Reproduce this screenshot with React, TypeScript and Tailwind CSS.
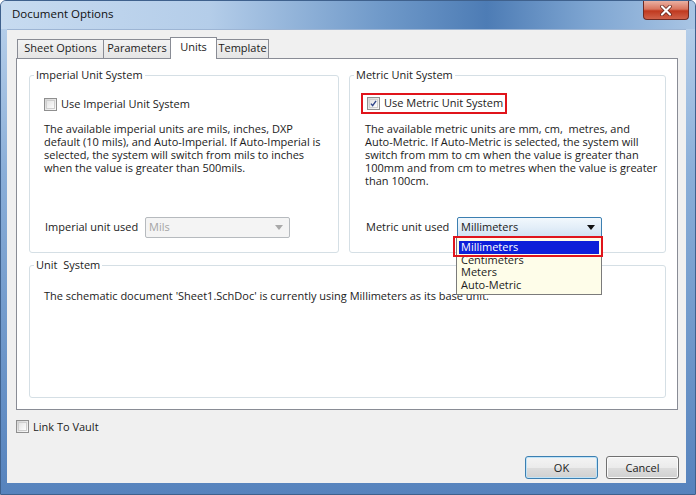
import React from "react";

function Check({ on = false }: { on?: boolean }) {
  return (
    <span className="flex h-[13px] w-[13px] shrink-0 items-center justify-center border border-[#8f8f8f] bg-[linear-gradient(135deg,#d4d4d4,#fbfbfb)]">
      <span className="flex h-[9px] w-[9px] items-center justify-center border border-[#cfcfcf] bg-[linear-gradient(135deg,#e4e4e4,#fdfdfd)]">
        {on && (
          <svg width="9" height="9" viewBox="0 0 9 9">
            <path d="M1.2 4.6 L3.4 7.2 L7.8 1.2" fill="none" stroke="#2f4489" strokeWidth="1.8" />
          </svg>
        )}
      </span>
    </span>
  );
}

function Group({ title, className, children }: { title: string; className: string; children?: React.ReactNode }) {
  return (
    <div className={`relative rounded-[3px] border border-[#d5dfe5] ${className}`}>
      <span className="absolute left-[4px] top-[-9px] whitespace-pre bg-white px-[2px] leading-[15px]">{title}</span>
      {children}
    </div>
  );
}

function Arrow({ color }: { color: string }) {
  return (
    <svg width="8" height="5" viewBox="0 0 8 5">
      <path d="M0 0 H8 L4 5 Z" fill={color} />
    </svg>
  );
}

export default function App() {
  return (
    <div className="h-[495px] w-[696px] bg-white font-['Open_Sans','Noto_Sans',sans-serif] text-[11px] text-[#1b1b1b]">
      <div className="flex h-[495px] w-[696px] flex-col rounded-t-[6px] border border-[#3f618d] bg-[linear-gradient(180deg,#bcd3ec_0%,#8aaed8_35%,#5683bd_100%)]">
        {/* title bar */}
        <div className="flex h-[28px] items-start rounded-t-[5px] bg-[linear-gradient(90deg,#c7dbf0_0%,#b4cde9_30%,#6f99c9_55%,#4d7cb5_70%,#7fa6d2_85%,#a9c5e4_100%)]">
          <span className="mt-[4px] pl-[11px] text-[11.5px] leading-[18px] text-[#101010]">Document Options</span>
          <button className="ml-auto mr-[6px] flex h-[19px] w-[46px] items-center justify-center rounded-b-[4px] border border-t-0 border-[#6e2a23] bg-[linear-gradient(180deg,#eab0a2_0%,#d9755f_45%,#c0391f_55%,#d0624a_100%)]">
            <svg width="12" height="11" viewBox="0 0 12 11">
              <path d="M2 1.5 L10 9.5 M10 1.5 L2 9.5" stroke="#5a1c14" strokeWidth="3.6" strokeLinecap="round" />
              <path d="M2 1.5 L10 9.5 M10 1.5 L2 9.5" stroke="#ffffff" strokeWidth="2.2" strokeLinecap="round" />
            </svg>
          </button>
        </div>

        {/* client */}
        <div className="ml-[6px] mr-[9px] flex h-[454px] flex-col border-t border-[#9db5d4] bg-[#f0f0f0]">
          {/* tabs */}
          <div className="relative z-10 ml-[10px] mt-[7px] mb-[-1px] flex h-[22px] items-end">
            <div className="flex h-[20px] w-[87px] items-center justify-center border border-[#898c95] bg-[linear-gradient(180deg,#f3f3f3,#e5e5e5)] pb-[1px]">Sheet Options</div>
            <div className="flex h-[20px] w-[67px] items-center justify-center border border-l-0 border-[#898c95] bg-[linear-gradient(180deg,#f3f3f3,#e5e5e5)] pb-[1px]">Parameters</div>
            <div className="ml-[-1px] flex h-[22px] w-[47px] items-center justify-center border border-b-0 border-[#898c95] bg-white pb-[2px]">Units</div>
            <div className="flex h-[20px] w-[52px] items-center justify-center border border-l-0 border-[#898c95] bg-[linear-gradient(180deg,#f3f3f3,#e5e5e5)] pb-[1px]">Template</div>
          </div>

          {/* panel */}
          <div className="ml-[9px] mr-[8px] flex h-[352px] flex-col border border-[#898c95] bg-white pl-[12px] pr-[11px] pt-[16px]">
            <div className="flex h-[178px] gap-[10px]">
              <Group title="Imperial Unit System" className="flex w-[310px] flex-col pl-[14px] pt-[20px] pb-[14px]">
                <div className="flex h-[16px] items-center gap-[4px]">
                  <Check />
                  <span>Use Imperial Unit System</span>
                </div>
                <div className="mt-[10px] whitespace-nowrap leading-[13px]">
                  The available imperial units are mils, inches, DXP
                  <br />
                  default (10 mils), and Auto-Imperial. If Auto-Imperial is
                  <br />
                  selected, the system will switch from mils to inches
                  <br />
                  when the value is greater than 500mils.
                </div>
                <div className="mt-auto flex items-center">
                  <span className="w-[101px] pl-[1px]">Imperial unit used</span>
                  <div className="flex h-[21px] w-[145px] items-center justify-between rounded-[2px] border border-[#b6babe] bg-[#f4f4f4] pl-[3px] pr-[6px] text-[#a4a4a4]">
                    <span>Mils</span>
                    <Arrow color="#a9a9a9" />
                  </div>
                </div>
              </Group>

              <Group title="Metric Unit System" className="flex flex-1 flex-col pl-[15px] pt-[17px] pb-[14px]">
                <div className="ml-[-4px] flex h-[21px] items-center gap-[4px] self-start border-2 border-[#e0141b] pl-[4px] pr-[2px]">
                  <Check on />
                  <span>Use Metric Unit System</span>
                </div>
                <div className="mt-[8px] whitespace-nowrap leading-[13px]">
                  The available metric units are mm, cm,&nbsp; metres, and
                  <br />
                  Auto-Metric. If Auto-Metric is selected, the system will
                  <br />
                  switch from mm to cm when the value is greater than
                  <br />
                  100mm and from cm to metres when the value is greater
                  <br />
                  than 100cm.
                </div>
                <div className="mt-auto flex items-center">
                  <span className="w-[92px] pl-[1px]">Metric unit used</span>
                  <div className="relative h-[21px] w-[145px]">
                    <div className="flex h-full w-full items-center justify-between rounded-[2px] border border-[#3c7fb1] bg-[linear-gradient(180deg,#f2f8fd_0%,#e3eef8_50%,#cfe2f2_100%)] pl-[3px] pr-[6px]">
                      <span>Millimeters</span>
                      <Arrow color="#111111" />
                    </div>
                    <div className="absolute left-[-1px] top-[20px] z-20 h-[58px] w-[146px] border border-[#7b7b7b] bg-[#fefde9] pt-[3px] leading-[12.5px]">
                      <div className="mx-[2px] h-[12.5px] bg-[#0d1fd9] px-[2px] text-white">Millimeters</div>
                      <div className="mx-[2px] h-[12.5px] px-[2px]">Centimeters</div>
                      <div className="mx-[2px] h-[12.5px] px-[2px]">Meters</div>
                      <div className="mx-[2px] h-[12.5px] px-[2px]">Auto-Metric</div>
                    </div>
                    <div className="absolute left-[-4px] top-[19px] z-30 h-[21px] w-[150px] border-2 border-[#e0141b]" />
                  </div>
                </div>
              </Group>
            </div>

            <Group title="Unit  System" className="mt-[12px] h-[133px] pl-[14px] pt-[23px]">
              <div className="leading-[13px]">
                The schematic document 'Sheet1.SchDoc' is currently using Millimeters as its base unit.
              </div>
            </Group>
          </div>

          {/* bottom */}
          <div className="ml-[9px] mt-[10px] flex h-[13px] items-center gap-[4px] leading-[13px]">
            <Check />
            <span>Link To Vault</span>
          </div>
          <div className="mr-[7px] mt-[23px] flex justify-end gap-[8px]">
            <button className="h-[23px] w-[73px] rounded-[3px] border border-[#3c7fb1] bg-[linear-gradient(180deg,#f4f4f4_0%,#ebebeb_50%,#dddddd_51%,#d0d0d0_100%)] leading-[20px] shadow-[inset_0_0_0_1px_#bfe3f8]">
              OK
            </button>
            <button className="h-[23px] w-[73px] rounded-[3px] border border-[#707070] bg-[linear-gradient(180deg,#f4f4f4_0%,#ebebeb_50%,#dddddd_51%,#d0d0d0_100%)] leading-[20px] shadow-[inset_0_0_0_1px_#fbfbfb]">
              Cancel
            </button>
          </div>
        </div>
      </div>
    </div>
  );
}
